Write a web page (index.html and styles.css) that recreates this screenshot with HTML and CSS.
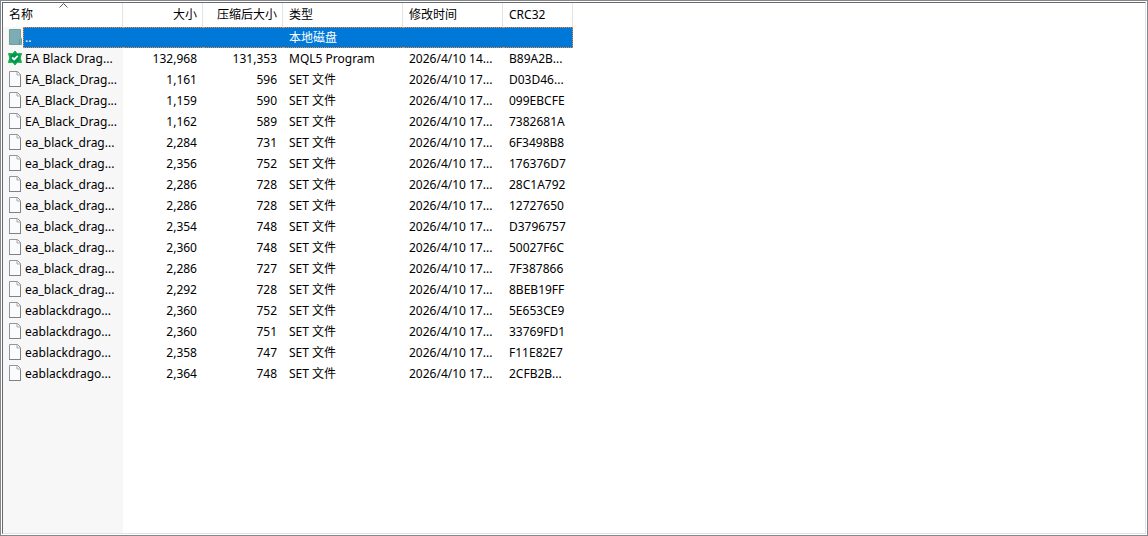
FILE: index.html
```html
<!DOCTYPE html>
<html lang="zh-CN">
<head>
	<meta charset="UTF-8">
	<title>文件列表</title>
	<link rel="stylesheet" href="styles.css">
</head>
<body>
	<svg class="defs" aria-hidden="true">
		<symbol id="doc" viewBox="0 0 16 16">
			<path d="M2.5 .5h8l3 3v12h-11z" fill="#fafbfc" stroke="#929598"/>
			<path d="M10 1v3h3.500" fill="none" stroke="#a4a7aa"/>
			<path d="M2 15.500h12M13.500 5v11" stroke="#7f8285"/>
		</symbol>
		<symbol id="folder" viewBox="0 0 16 16">
			<path d="M1 0h1v16H1z" fill="#f3f0ea"/>
			<path d="M2.500 .5h11v9h1v6h-12z" fill="#7eacb5" stroke="#6fa09a"/>
			<path d="M12.500 10v5.500" stroke="#5a9a9a"/>
		</symbol>
		<symbol id="mql" viewBox="0 0 16 16">
			<path d="M8 1l2.200 2.800 4.300-.3-1.300 4.500 1.300 4.500-4.300-.3L8 15l-2.200-2.800-4.300.3L2.800 8 1.500 3.500l4.300.3z" fill="#14b04a" stroke="#14b04a" stroke-width="1" stroke-linejoin="round"/>
			<path d="M8 2.500l4.500 2.700v5.600L8 13.500l-4.500-2.700V5.200z" fill="#009552"/>
			<path d="M5.200 7.500l2 2 3.600-3.600" fill="none" stroke="#fff" stroke-width="1.800"/>
		</symbol>
	</svg>

	<div class="frame">
		<div class="list">
			<table class="files">
				<colgroup>
					<col class="w-name">
					<col class="w-size">
					<col class="w-size">
					<col class="w-type">
					<col class="w-time">
					<col class="w-crc">
				</colgroup>
				<thead>
					<tr>
						<th aria-sort="ascending"><button type="button">名称</button><svg class="sort" viewBox="0 0 9 5"><path d="M.5 4.500l4-4 4 4" fill="none" stroke="#555"/></svg></th>
						<th class="num"><button type="button">大小</button></th>
						<th class="num"><button type="button">压缩后大小</button></th>
						<th><button type="button">类型</button></th>
						<th><button type="button">修改时间</button></th>
						<th><button type="button">CRC32</button></th>
					</tr>
				</thead>
				<tbody id="rows"></tbody>
			</table>
		</div>
	</div>

	<script src="list.js"></script>
</body>
</html>
```
FILE: styles.css
```css
*{
	box-sizing: border-box;
}

body{
	margin: 0;
	font-family: "Noto Sans", "Noto Sans CJK SC", sans-serif;
	font-size: 12px;
	line-height: 20px;
	color: #000;
	background: #fff;
}

.defs{
	display: none;
}

.frame{
	height: 100vh;
	padding: 1px;
	border: 1px solid #828790;
}

.list{
	height: 100%;
	overflow: hidden;
	border: 1px solid #e3e3e3;
	border-top-color: #696969;
	border-left-color: #696969;
	/* shaded sort column, runs on below the last row */
	background: linear-gradient(#f7f7f7, #f7f7f7) 0 24px / 120px 100% no-repeat;
}

.files{
	width: 570px;
	table-layout: fixed;
	border-collapse: separate;
	border-spacing: 0;
}

.w-name, .w-type{
	width: 120px;
}
.w-size{
	width: 80px;
}
.w-time{
	width: 100px;
}
.w-crc{
	width: 70px;
}

.files th{
	position: relative;
	height: 24px;
	padding: 0;
	border-right: 1px solid #e5e5e5;
}

.files th button{
	display: block;
	width: 100%;
	height: 24px;
	padding: 0 5px 0 6px;
	border: 0;
	background: none;
	font: inherit;
	font-weight: normal;
	color: inherit;
	text-align: left;
}

.sort{
	position: absolute;
	top: 0;
	left: 56px;
	width: 9px;
	height: 5px;
}

.files td{
	height: 21px;
	padding: 0 6px;
	line-height: 19px;
	white-space: nowrap;
	overflow: hidden;
}

.files .num, .files .num button{
	text-align: right;
}

.files td.name{
	padding: 0;
}

.entry{
	display: flex;
	align-items: flex-start;
}

.icon{
	flex: none;
	width: 16px;
	height: 16px;
	margin: 2px 0 0 4px;
}

.label{
	flex: 1;
	height: 21px;
	padding-left: 2px;
	border: 1px solid transparent;
	border-width: 1px 0;
}

.selected td:not(.name), .selected .label{
	color: #fff;
	background: #0078d7;
	border: 1px dotted #ff8728;
	border-width: 1px 0;
}
.selected .label{
	border-left-width: 1px;
	padding-left: 1px;
}
.selected td:last-child{
	border-right-width: 1px;
}
```
FILE: list.js
```javascript
var files = [
	["folder", "..", "", "", "本地磁盘", "", ""],
	["mql", "EA Black Drag...", "132,968", "131,353", "MQL5 Program", "2026/4/10 14...", "B89A2B..."],
	["doc", "EA_Black_Drag...", "1,161", "596", "SET 文件", "2026/4/10 17...", "D03D46..."],
	["doc", "EA_Black_Drag...", "1,159", "590", "SET 文件", "2026/4/10 17...", "099EBCFE"],
	["doc", "EA_Black_Drag...", "1,162", "589", "SET 文件", "2026/4/10 17...", "7382681A"],
	["doc", "ea_black_drag...", "2,284", "731", "SET 文件", "2026/4/10 17...", "6F3498B8"],
	["doc", "ea_black_drag...", "2,356", "752", "SET 文件", "2026/4/10 17...", "176376D7"],
	["doc", "ea_black_drag...", "2,286", "728", "SET 文件", "2026/4/10 17...", "28C1A792"],
	["doc", "ea_black_drag...", "2,286", "728", "SET 文件", "2026/4/10 17...", "12727650"],
	["doc", "ea_black_drag...", "2,354", "748", "SET 文件", "2026/4/10 17...", "D3796757"],
	["doc", "ea_black_drag...", "2,360", "748", "SET 文件", "2026/4/10 17...", "50027F6C"],
	["doc", "ea_black_drag...", "2,286", "727", "SET 文件", "2026/4/10 17...", "7F387866"],
	["doc", "ea_black_drag...", "2,292", "728", "SET 文件", "2026/4/10 17...", "8BEB19FF"],
	["doc", "eablackdrago...", "2,360", "752", "SET 文件", "2026/4/10 17...", "5E653CE9"],
	["doc", "eablackdrago...", "2,360", "751", "SET 文件", "2026/4/10 17...", "33769FD1"],
	["doc", "eablackdrago...", "2,358", "747", "SET 文件", "2026/4/10 17...", "F11E82E7"],
	["doc", "eablackdrago...", "2,364", "748", "SET 文件", "2026/4/10 17...", "2CFB2B..."]
];

var html = "";
for(var i = 0 ; i < files.length ; i++){
	var f = files[i];
	html += (f[0] == "folder" ? '<tr class="selected">' : "<tr>") +
		'<td class="name"><div class="entry"><svg class="icon"><use href="#' + f[0] + '"/></svg><span class="label">' + f[1] + "</span></div></td>" +
		'<td class="num">' + f[2] + "</td>" +
		'<td class="num">' + f[3] + "</td>" +
		"<td>" + f[4] + "</td>" +
		"<td>" + f[5] + "</td>" +
		"<td>" + f[6] + "</td></tr>";
}
document.getElementById("rows").innerHTML = html;
```
